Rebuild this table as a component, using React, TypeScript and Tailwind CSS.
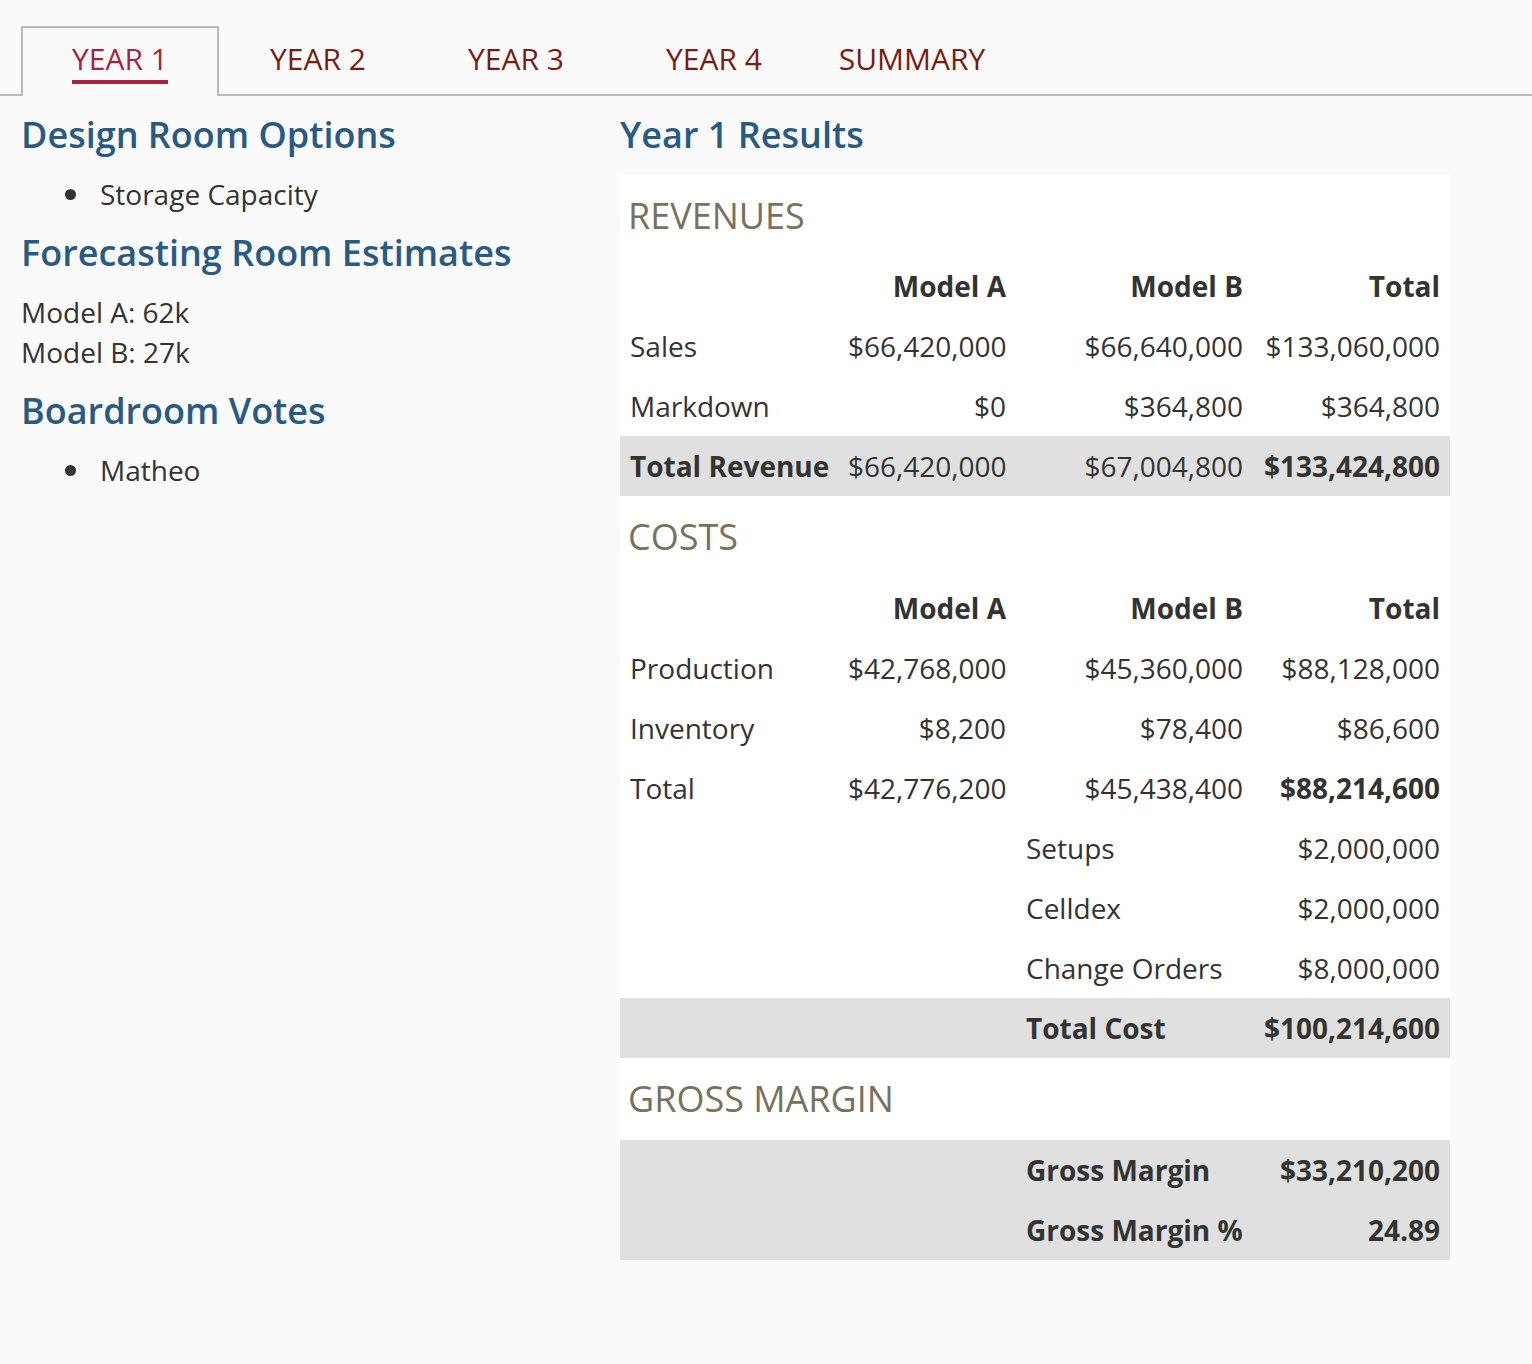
import React from 'react';

const tabs = ['YEAR 1', 'YEAR 2', 'YEAR 3', 'YEAR 4', 'SUMMARY'];

type Cell = { text: string; bold?: boolean; align?: 'left' | 'right' };

function Row({ cells, gray, offset }: { cells: Cell[]; gray?: boolean; offset?: boolean }) {
  return (
    <div
      className={`grid h-[60px] grid-cols-[218px_178px_237px_197px] items-center ${gray ? 'bg-[#e0e0e0]' : ''}`}
    >
      {offset && <div className="col-span-2" />}
      {cells.map((c, i) => (
        <div
          key={i}
          className={`whitespace-nowrap px-[10px] ${c.align === 'right' ? 'text-right' : 'text-left'} ${c.bold ? 'font-bold' : ''}`}
        >
          {c.text}
        </div>
      ))}
    </div>
  );
}

function SectionTitle({ children, first }: { children: React.ReactNode; first?: boolean }) {
  return (
    <div className={`flex ${first ? 'h-[81px]' : 'h-[82px]'} items-center pl-[8px] text-[36px] text-[#78715f]`}>
      {children}
    </div>
  );
}

function HeaderRow() {
  return (
    <Row
      cells={[
        { text: '' },
        { text: 'Model A', bold: true, align: 'right' },
        { text: 'Model B', bold: true, align: 'right' },
        { text: 'Total', bold: true, align: 'right' },
      ]}
    />
  );
}

function num(a: string, b: string, c: string, label: string, opts: { labelBold?: boolean; totalBold?: boolean } = {}) {
  return [
    { text: label, bold: opts.labelBold },
    { text: a, align: 'right' as const },
    { text: b, align: 'right' as const },
    { text: c, align: 'right' as const, bold: opts.totalBold },
  ];
}

function Bullet({ children }: { children: React.ReactNode }) {
  return (
    <li className="flex items-center leading-[40px]">
      <span className="ml-[44px] mr-[24px] h-[11px] w-[11px] rounded-full bg-[#333]" />
      {children}
    </li>
  );
}

export default function App() {
  return (
    <div className="min-h-screen bg-[#fafafa] font-['Open_Sans',sans-serif] text-[28px] text-[#333]">
      {/* tabs */}
      <div className="flex border-b-2 border-[#bbb] pl-[21px] pt-[26px]">
        {tabs.map((t, i) => (
          <div
            key={t}
            className={`-mb-[2px] flex h-[70px] w-[198px] justify-center border-2 border-b-0 pt-[11px] ${
              i === 0 ? 'border-[#bbb] bg-[#fafafa]' : 'border-transparent'
            }`}
          >
            <span
              className={`inline-block h-[45px] border-b-4 text-[30px] leading-[40px] ${
                i === 0 ? 'border-[#a8233d] text-[#a8233d]' : 'border-transparent text-[#7a1b10]'
              }`}
            >
              {t}
            </span>
          </div>
        ))}
      </div>

      <div className="flex pl-[21px] pt-[17px]">
        {/* left column */}
        <div className="flex w-[599px] flex-col gap-[17px]">
          <h2 className="text-[36px] font-semibold leading-[44px] text-[#285a84]">Design Room Options</h2>
          <ul>
            <Bullet>Storage Capacity</Bullet>
          </ul>
          <h2 className="text-[36px] font-semibold leading-[44px] text-[#285a84]">Forecasting Room Estimates</h2>
          <div className="leading-[40px]">
            <div>Model A: 62k</div>
            <div>Model B: 27k</div>
          </div>
          <h2 className="text-[36px] font-semibold leading-[44px] text-[#285a84]">Boardroom Votes</h2>
          <ul>
            <Bullet>Matheo</Bullet>
          </ul>
        </div>

        {/* right column */}
        <div className="w-[830px]">
          <h2 className="text-[36px] font-semibold leading-[44px] text-[#285a84]">Year 1 Results</h2>
          <div className="mt-[18px] bg-white">
            <SectionTitle first>REVENUES</SectionTitle>
            <HeaderRow />
            <Row cells={num('$66,420,000', '$66,640,000', '$133,060,000', 'Sales')} />
            <Row cells={num('$0', '$364,800', '$364,800', 'Markdown')} />
            <Row
              gray
              cells={num('$66,420,000', '$67,004,800', '$133,424,800', 'Total Revenue', {
                labelBold: true,
                totalBold: true,
              })}
            />

            <SectionTitle>COSTS</SectionTitle>
            <HeaderRow />
            <Row cells={num('$42,768,000', '$45,360,000', '$88,128,000', 'Production')} />
            <Row cells={num('$8,200', '$78,400', '$86,600', 'Inventory')} />
            <Row cells={num('$42,776,200', '$45,438,400', '$88,214,600', 'Total', { totalBold: true })} />
            <Row offset cells={[{ text: 'Setups' }, { text: '$2,000,000', align: 'right' }]} />
            <Row offset cells={[{ text: 'Celldex' }, { text: '$2,000,000', align: 'right' }]} />
            <Row offset cells={[{ text: 'Change Orders' }, { text: '$8,000,000', align: 'right' }]} />
            <Row
              gray
              offset
              cells={[
                { text: 'Total Cost', bold: true },
                { text: '$100,214,600', bold: true, align: 'right' },
              ]}
            />

            <SectionTitle>GROSS MARGIN</SectionTitle>
            <Row
              gray
              offset
              cells={[
                { text: 'Gross Margin', bold: true },
                { text: '$33,210,200', bold: true, align: 'right' },
              ]}
            />
            <Row
              gray
              offset
              cells={[
                { text: 'Gross Margin %', bold: true },
                { text: '24.89', bold: true, align: 'right' },
              ]}
            />
          </div>
        </div>
      </div>
    </div>
  );
}
